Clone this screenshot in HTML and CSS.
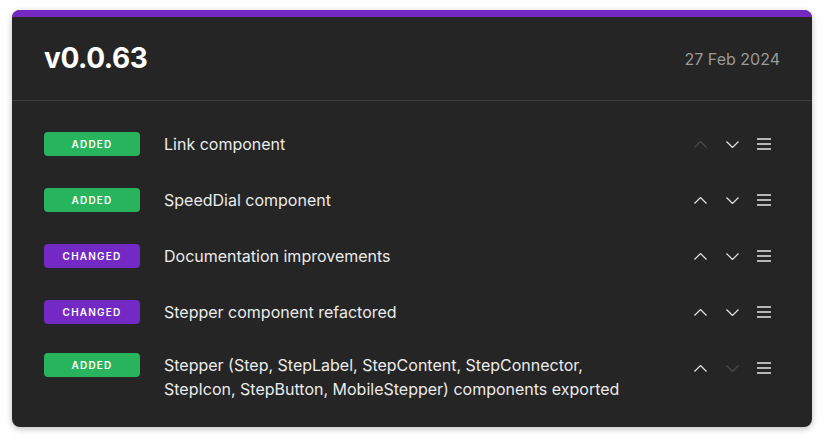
FILE: index.html
```html
<!DOCTYPE html>
<html lang="en">
<head>
<meta charset="utf-8">
<title>Changelog v0.0.63</title>
<link rel="stylesheet" href="styles.css">
</head>
<body>
<div class="card">
  <div class="topbar"></div>
  <header class="head">
    <h1 class="version">v0.0.63</h1>
    <span class="date">27 Feb 2024</span>
  </header>
  <ul class="list">
    <li class="row">
      <span class="badge added">ADDED</span>
      <span class="text">Link component</span>
      <div class="actions">
        <button class="btn disabled"><svg class="chev" viewBox="0 0 13 7" width="13" height="7"><path d="M0.5 6.5L6.5 0.5L12.5 6.5"/></svg></button>
        <button class="btn"><svg class="chev" viewBox="0 0 13 7" width="13" height="7"><path d="M0.5 0.5L6.5 6.5L12.5 0.5"/></svg></button>
        <button class="btn"><svg class="menu" viewBox="0 0 14 12" width="14" height="12"><path d="M0 1H14M0 6H14M0 11H14"/></svg></button>
      </div>
    </li>
    <li class="row">
      <span class="badge added">ADDED</span>
      <span class="text">SpeedDial component</span>
      <div class="actions">
        <button class="btn"><svg class="chev" viewBox="0 0 13 7" width="13" height="7"><path d="M0.5 6.5L6.5 0.5L12.5 6.5"/></svg></button>
        <button class="btn"><svg class="chev" viewBox="0 0 13 7" width="13" height="7"><path d="M0.5 0.5L6.5 6.5L12.5 0.5"/></svg></button>
        <button class="btn"><svg class="menu" viewBox="0 0 14 12" width="14" height="12"><path d="M0 1H14M0 6H14M0 11H14"/></svg></button>
      </div>
    </li>
    <li class="row">
      <span class="badge changed">CHANGED</span>
      <span class="text">Documentation improvements</span>
      <div class="actions">
        <button class="btn"><svg class="chev" viewBox="0 0 13 7" width="13" height="7"><path d="M0.5 6.5L6.5 0.5L12.5 6.5"/></svg></button>
        <button class="btn"><svg class="chev" viewBox="0 0 13 7" width="13" height="7"><path d="M0.5 0.5L6.5 6.5L12.5 0.5"/></svg></button>
        <button class="btn"><svg class="menu" viewBox="0 0 14 12" width="14" height="12"><path d="M0 1H14M0 6H14M0 11H14"/></svg></button>
      </div>
    </li>
    <li class="row">
      <span class="badge changed">CHANGED</span>
      <span class="text">Stepper component refactored</span>
      <div class="actions">
        <button class="btn"><svg class="chev" viewBox="0 0 13 7" width="13" height="7"><path d="M0.5 6.5L6.5 0.5L12.5 6.5"/></svg></button>
        <button class="btn"><svg class="chev" viewBox="0 0 13 7" width="13" height="7"><path d="M0.5 0.5L6.5 6.5L12.5 0.5"/></svg></button>
        <button class="btn"><svg class="menu" viewBox="0 0 14 12" width="14" height="12"><path d="M0 1H14M0 6H14M0 11H14"/></svg></button>
      </div>
    </li>
    <li class="row row-top">
      <span class="badge added">ADDED</span>
      <span class="text">Stepper (Step, StepLabel, StepContent, StepConnector, StepIcon, StepButton, MobileStepper) components exported</span>
      <div class="actions">
        <button class="btn"><svg class="chev" viewBox="0 0 13 7" width="13" height="7"><path d="M0.5 6.5L6.5 0.5L12.5 6.5"/></svg></button>
        <button class="btn disabled"><svg class="chev" viewBox="0 0 13 7" width="13" height="7"><path d="M0.5 0.5L6.5 6.5L12.5 0.5"/></svg></button>
        <button class="btn"><svg class="menu" viewBox="0 0 14 12" width="14" height="12"><path d="M0 1H14M0 6H14M0 11H14"/></svg></button>
      </div>
    </li>
  </ul>
</div>
</body>
</html>
```

FILE: styles.css
```css
* { box-sizing: border-box; }
html, body { margin: 0; padding: 0; background: #ffffff; }
body {
  font-family: Inter, "Noto Sans", "Liberation Sans", sans-serif;
  padding: 10px 12px;
}
.card {
  width: 800px;
  background: #252525;
  border-radius: 8px;
  overflow: hidden;
  box-shadow: 0 2px 6px rgba(0, 0, 0, 0.25);
}
.topbar {
  height: 7px;
  background: #7629c2;
}
.head {
  display: flex;
  justify-content: space-between;
  align-items: center;
  padding: 24px 32px;
  border-bottom: 1px solid #3b3b3b;
}
.version {
  margin: 0;
  font-size: 28px;
  line-height: 35px;
  font-weight: 700;
  color: #ffffff;
  letter-spacing: -0.4px;
}
.date {
  font-size: 16px;
  color: #9a9a9a;
}
.list {
  list-style: none;
  margin: 0;
  padding: 28px 32px 26px;
  display: flex;
  flex-direction: column;
  gap: 26px;
}
.row {
  display: flex;
  align-items: center;
}
.row-top { align-items: flex-start; }
.badge {
  flex: 0 0 96px;
  height: 24px;
  border-radius: 4px;
  display: flex;
  align-items: center;
  justify-content: center;
  font-size: 10px;
  font-weight: 600;
  letter-spacing: 1.2px;
  color: #ffffff;
}
.badge.added { background: #27b45d; }
.badge.changed { background: #7428c4; }
.text {
  flex: 1;
  margin-left: 24px;
  font-size: 16px;
  line-height: 24px;
  color: #ebebeb;
}
.actions {
  display: flex;
  margin-left: 32px;
}
.btn {
  width: 32px;
  height: 30px;
  padding: 0;
  border: 0;
  background: transparent;
  display: flex;
  align-items: center;
  justify-content: center;
  color: #e6e6e6;
  cursor: pointer;
}
.btn svg path {
  fill: none;
  stroke: currentColor;
}
.chev path { stroke-width: 1.2; }
.menu path { stroke-width: 1.5; }
.btn.disabled { color: #4a4a4a; }
```
